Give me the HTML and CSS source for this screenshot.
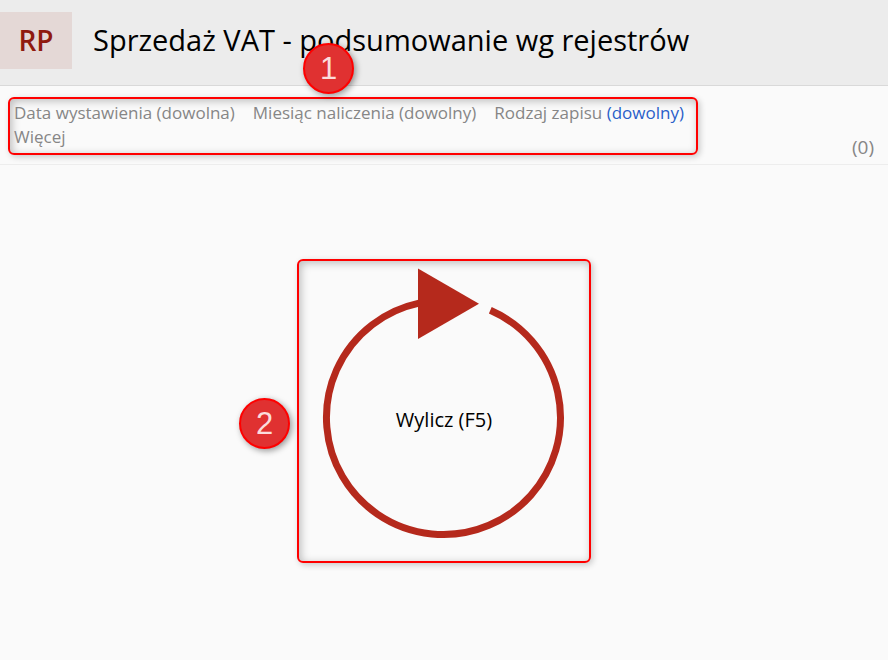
FILE: index.html
```html
<!DOCTYPE html>
<html lang="pl">
<head>
    <meta charset="UTF-8">
    <meta name="viewport" content="width=device-width, initial-scale=1.0">
    <title>Sprzedaż VAT - podsumowanie wg rejestrów</title>
    <link rel="stylesheet" href="styles.css">
</head>
<body>

    <header class="page-header">
        <div class="tile">RP</div>
        <h1>Sprzedaż VAT - podsumowanie wg rejestrów</h1>
    </header>

    <section class="filter-bar">
        <div class="filters callout">
            <span class="badge badge-filters">1</span>
            <button type="button" class="filter">Data wystawienia (dowolna)</button>
            <button type="button" class="filter">Miesiąc naliczenia (dowolny)</button>
            <button type="button" class="filter">Rodzaj zapisu <span class="active">(dowolny)</span></button>
            <button type="button" class="filter">Więcej</button>
        </div>
        <span class="count">(0)</span>
    </section>

    <main>
        <div class="callout calc-box">
            <span class="badge badge-calc">2</span>
            <button type="button" class="calc">
                <svg width="290" height="300" viewBox="0 0 290 300" aria-hidden="true">
                    <path d="M191.3 49.3A117 117 0 1 1 120 42.1" fill="none" stroke="#b5291c" stroke-width="7"/>
                    <path d="M119 7.5V78L180 42.8Z" fill="#b5291c"/>
                </svg>
                <span class="calc-label">Wylicz (F5)</span>
            </button>
        </div>
    </main>

</body>
</html>
```

FILE: styles.css
```css
* {
    box-sizing: border-box;
}

body {
    margin: 0;
    min-height: 100vh;
    display: flex;
    flex-direction: column;
    font-family: "Segoe UI", "Open Sans", sans-serif;
    background-color: #fafafa;
    color: #000;
}

button {
    padding: 0;
    border: none;
    background: none;
    font: inherit;
    color: inherit;
    cursor: pointer;
}

.page-header {
    display: flex;
    align-items: center;
    gap: 21px;
    padding: 12px 16px 16px 0;
    background-color: #ececec;
    border-bottom: 1px solid #d9d9d9;
}

.tile {
    width: 72px;
    line-height: 56px;
    padding-bottom: 1px;
    background-color: #e4d8d6;
    color: #8f1a0f;
    font-size: 28px;
    font-weight: 600;
    text-align: center;
}

h1 {
    margin: 0;
    padding-bottom: 2px;
    font-size: 29px;
    line-height: 40px;
    font-weight: 400;
}

.filter-bar {
    display: flex;
    justify-content: space-between;
    align-items: flex-end;
    padding: 11px 14px 9px 8px;
    border-bottom: 1px solid #ededed;
    font-size: 17px;
    line-height: 24px;
    color: #868686;
}

/* red frame round a numbered part */
.callout {
    position: relative;
    border: 2px solid #ff0000;
    border-radius: 6px;
    box-shadow: 2px 2px 6px rgba(0, 0, 0, 0.2), inset 2px 2px 8px rgba(0, 0, 0, 0.25);
}

.filters {
    display: flex;
    flex-wrap: wrap;
    column-gap: 18px;
    max-width: 690px;
    padding: 2px 4px 4px;
}

.filter {
    line-height: 24px;
}

.active {
    color: #2a5fc9;
}

.count {
    font-size: 19px;
    line-height: 16px;
}

.badge {
    position: absolute;
    width: 51px;
    height: 51px;
    border: 2px solid #ff0000;
    border-radius: 50%;
    background-color: #e03131;
    box-shadow: 2px 2px 6px rgba(0, 0, 0, 0.4);
    color: #fbdcdc;
    font-family: "Liberation Sans", Arial, sans-serif;
    font-size: 31px;
    line-height: 47px;
    text-align: center;
}

.badge-filters {
    top: -56px;
    left: 293px;
}

.badge-calc {
    top: 137px;
    left: -60px;
}

main {
    flex: 1;
    display: flex;
    justify-content: center;
    align-items: center;
    padding: 16px 16px 20px;
}

.calc {
    display: grid;
    place-items: center;
}

.calc svg,
.calc-label {
    grid-area: 1 / 1;
}

.calc-label {
    padding-top: 18px;
    font-size: 20px;
    line-height: 24px;
}
```
